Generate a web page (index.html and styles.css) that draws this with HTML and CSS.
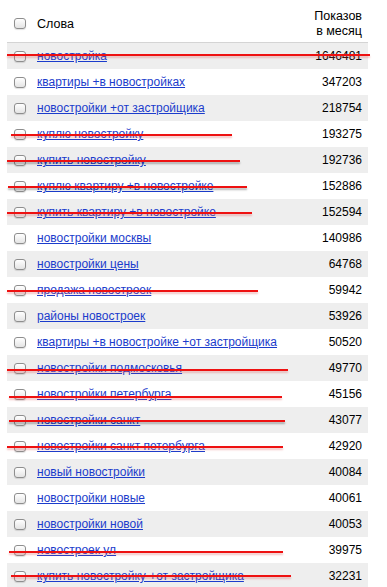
FILE: index.html
```html
<!DOCTYPE html>
<html>
<head>
<meta charset="utf-8">
<link rel="stylesheet" href="styles.css">
</head>
<body>
<div class="table">
  <div class="head">
    <span class="cb"></span>
    <span class="word">Слова</span>
    <span class="count">Показов<br>в месяц</span>
  </div>
  <div class="row odd"><span class="cb"></span><a class="word" href="#">новостройка</a><span class="count">1646481</span><i class="strike" style="top:11px;left:0;width:363px"></i></div>
  <div class="row"><span class="cb"></span><a class="word" href="#">квартиры +в новостройках</a><span class="count">347203</span></div>
  <div class="row odd"><span class="cb"></span><a class="word" href="#">новостройки +от застройщика</a><span class="count">218754</span></div>
  <div class="row"><span class="cb"></span><a class="word" href="#">куплю новостройку</a><span class="count">193275</span><i class="strike" style="top:13px;left:4px;width:221px"></i></div>
  <div class="row odd"><span class="cb"></span><a class="word" href="#">купить новостройку</a><span class="count">192736</span><i class="strike dark" style="top:13px;left:0;width:233px"></i></div>
  <div class="row"><span class="cb"></span><a class="word" href="#">куплю квартиру +в новостройке</a><span class="count">152886</span><i class="strike dark" style="top:13px;left:1px;width:239px"></i></div>
  <div class="row odd"><span class="cb"></span><a class="word" href="#">купить квартиру +в новостройке</a><span class="count">152594</span><i class="strike" style="top:13px;left:0;width:245px"></i></div>
  <div class="row"><span class="cb"></span><a class="word" href="#">новостройки москвы</a><span class="count">140986</span></div>
  <div class="row odd"><span class="cb"></span><a class="word" href="#">новостройки цены</a><span class="count">64768</span></div>
  <div class="row"><span class="cb"></span><a class="word" href="#">продажа новостроек</a><span class="count">59942</span><i class="strike" style="top:13px;left:0;width:251px"></i></div>
  <div class="row odd"><span class="cb"></span><a class="word" href="#">районы новостроек</a><span class="count">53926</span></div>
  <div class="row"><span class="cb"></span><a class="word" href="#">квартиры +в новостройке +от застройщика</a><span class="count">50520</span></div>
  <div class="row odd"><span class="cb"></span><a class="word" href="#">новостройки подмосковья</a><span class="count">49770</span><i class="strike" style="top:14px;left:0;width:281px"></i></div>
  <div class="row"><span class="cb"></span><a class="word" href="#">новостройки петербурга</a><span class="count">45156</span><i class="strike" style="top:15px;left:2px;width:273px"></i></div>
  <div class="row odd"><span class="cb"></span><a class="word" href="#">новостройки санкт</a><span class="count">43077</span><i class="strike dark" style="top:13px;left:2px;width:276px"></i></div>
  <div class="row"><span class="cb"></span><a class="word" href="#">новостройки санкт петербурга</a><span class="count">42920</span><i class="strike" style="top:13px;left:0;width:276px"></i></div>
  <div class="row odd"><span class="cb"></span><a class="word" href="#">новый новостройки</a><span class="count">40084</span></div>
  <div class="row"><span class="cb"></span><a class="word" href="#">новостройки новые</a><span class="count">40061</span></div>
  <div class="row odd"><span class="cb"></span><a class="word" href="#">новостройки новой</a><span class="count">40053</span></div>
  <div class="row"><span class="cb"></span><a class="word" href="#">новостроек ул</a><span class="count">39975</span><i class="strike" style="top:14px;left:2px;width:274px"></i></div>
  <div class="row odd"><span class="cb"></span><a class="word" href="#">купить новостройку +от застройщика</a><span class="count">32231</span><i class="strike" style="top:12px;left:4px;width:280px"></i></div>
</div>
</body>
</html>
```
FILE: styles.css
```css
html, body {
  margin: 0;
  padding: 0;
  background: #fff;
}
body {
  font-family: "Liberation Sans", Arial, sans-serif;
  font-size: 12px;
  color: #000;
}
.table {
  margin-left: 7px;
  width: 361px;
}
.head {
  display: flex;
  align-items: center;
  box-sizing: border-box;
  height: 43px;
  padding-top: 5px;
  border-bottom: 1px solid #d4d4d4;
  font-size: 12.5px;
}
.head .count {
  line-height: 15px;
  text-align: right;
}
.row {
  position: relative;
  display: flex;
  align-items: center;
  height: 26px;
}
.row.odd {
  background: #eeeeee;
}
.cb {
  flex: none;
  box-sizing: border-box;
  width: 12px;
  height: 11px;
  margin-left: 7px;
  margin-right: 11px;
  border: 1px solid #8e8e8e;
  border-radius: 3px;
  background: linear-gradient(#ffffff, #e4e4e4);
  box-shadow: 0 1px 1px rgba(0,0,0,0.12);
}
.word {
  flex: 1;
  color: #000;
}
a.word {
  color: #1b3ccc;
  text-decoration: underline;
}
.count {
  flex: none;
  padding-right: 6px;
  text-align: right;
}
.row .count {
  color: #000;
}
.strike {
  position: absolute;
  height: 2px;
  background: #ee1111;
  box-shadow: 0 2px 2px rgba(220, 80, 80, 0.35);
}
.strike.dark {
  box-shadow: 0 2px 2px rgba(0, 0, 0, 0.3);
}
```
